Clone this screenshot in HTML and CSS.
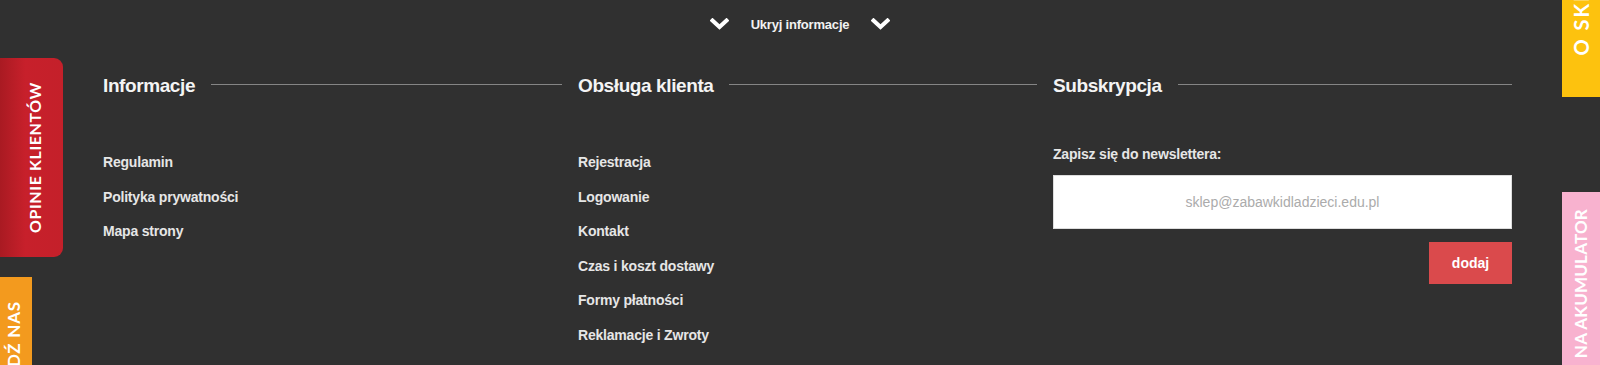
FILE: index.html
```html
<!DOCTYPE html>
<html lang="pl">
<head>
<meta charset="utf-8">
<title>Stopka</title>
<link rel="stylesheet" href="styles.css">
</head>
<body>
<footer class="footer">
  <div class="toggle">
    <svg class="chev" viewBox="0 0 19 12" width="19" height="12"><path d="M2.5 2.5 L9.5 9 L16.5 2.5" fill="none" stroke="#fff" stroke-width="4" stroke-linecap="square" stroke-linejoin="miter"/></svg>
    <span class="toggle-text">Ukryj informacje</span>
    <svg class="chev" viewBox="0 0 19 12" width="19" height="12"><path d="M2.5 2.5 L9.5 9 L16.5 2.5" fill="none" stroke="#fff" stroke-width="4" stroke-linecap="square" stroke-linejoin="miter"/></svg>
  </div>

  <div class="cols">
    <section class="col">
      <div class="col-head"><h3>Informacje</h3><span class="rule"></span></div>
      <ul class="links">
        <li><a href="#">Regulamin</a></li>
        <li><a href="#">Polityka prywatności</a></li>
        <li><a href="#">Mapa strony</a></li>
      </ul>
    </section>
    <section class="col">
      <div class="col-head"><h3>Obsługa klienta</h3><span class="rule"></span></div>
      <ul class="links">
        <li><a href="#">Rejestracja</a></li>
        <li><a href="#">Logowanie</a></li>
        <li><a href="#">Kontakt</a></li>
        <li><a href="#">Czas i koszt dostawy</a></li>
        <li><a href="#">Formy płatności</a></li>
        <li><a href="#">Reklamacje i Zwroty</a></li>
      </ul>
    </section>
    <section class="col">
      <div class="col-head"><h3>Subskrypcja</h3><span class="rule"></span></div>
      <form class="newsletter">
        <label class="nl-label" for="nl">Zapisz się do newslettera:</label>
        <input id="nl" class="nl-input" type="text" placeholder="sklep@zabawkidladzieci.edu.pl">
        <div class="nl-actions"><button type="button" class="nl-btn">dodaj</button></div>
      </form>
    </section>
  </div>
</footer>

<a href="#" class="tab tab-red"><span class="tab-text">OPINIE KLIENTÓW</span></a>
<a href="#" class="tab tab-orange"><span class="tab-text">ZNAJDŹ NAS</span></a>
<a href="#" class="tab tab-yellow"><span class="tab-text">O SKLEPIE</span></a>
<a href="#" class="tab tab-pink"><span class="tab-text">NA AKUMULATOR</span></a>
</body>
</html>
```

FILE: styles.css
```css
html, body {
  margin: 0;
  padding: 0;
  height: 100%;
  overflow: hidden;
}
body {
  background: #303030;
  font-family: "Liberation Sans", Arial, sans-serif;
  color: #ececec;
  position: relative;
}
.footer {
  padding: 0 0 0 103px;
}
.toggle {
  display: flex;
  justify-content: center;
  align-items: center;
  gap: 22px;
  height: 20px;
  padding-top: 14px;
  margin-left: -103px;
}
.chev { display: block; margin-top: -1px; }
.toggle-text {
  font-size: 13px;
  font-weight: bold;
  color: #f2f2f2;
  letter-spacing: -0.2px;
}
.cols {
  display: grid;
  grid-template-columns: repeat(3, 459px);
  column-gap: 16px;
  margin-top: 41px;
}
.col-head {
  display: flex;
  align-items: center;
  height: 22px;
}
.col-head h3 {
  margin: 0;
  font-size: 19px;
  line-height: 22px;
  font-weight: bold;
  color: #f4f4f4;
  letter-spacing: -0.4px;
}
.rule {
  flex: 1;
  height: 1px;
  background: #858585;
  margin-left: 16px;
  margin-top: -3px;
}
.links {
  list-style: none;
  margin: 48px 0 0;
  padding: 0;
}
.links li {
  line-height: 34.5px;
  height: 34.5px;
}
.links a {
  color: #e6e6e6;
  text-decoration: none;
  font-size: 14px;
  font-weight: bold;
  letter-spacing: -0.2px;
}
.newsletter {
  margin-top: 47px;
  display: flex;
  flex-direction: column;
}
.nl-label {
  font-size: 14px;
  line-height: 20px;
  font-weight: bold;
  color: #e6e6e6;
  letter-spacing: -0.2px;
}
.nl-input {
  margin-top: 11px;
  height: 54px;
  box-sizing: border-box;
  border: 1px solid #ddd;
  background: #fff;
  text-align: center;
  font-family: "Liberation Sans", Arial, sans-serif;
  font-size: 14px;
  color: #555;
  padding: 0 10px;
  outline: none;
}
.nl-input::placeholder { color: #ababab; }
.nl-actions {
  display: flex;
  justify-content: flex-end;
  margin-top: 13px;
}
.nl-btn {
  width: 83px;
  height: 42px;
  border: 0;
  background: #da4a4c;
  color: #fff;
  font-family: "Liberation Sans", Arial, sans-serif;
  font-size: 14px;
  font-weight: bold;
  cursor: pointer;
}

/* fixed side tabs (overlay) */
.tab {
  position: absolute;
  display: flex;
  justify-content: center;
  text-decoration: none;
  color: #fff;
  font-family: Lato, "Noto Sans", sans-serif;
  font-weight: bold;
  box-sizing: border-box;
}
.tab-text {
  writing-mode: vertical-rl;
  transform: rotate(180deg);
  white-space: nowrap;
}
.tab-red {
  left: 0;
  top: 58px;
  width: 63px;
  height: 199px;
  align-items: center;
  background: linear-gradient(to right, #a91a22, #c7202b 40%, #c4202a);
  border-radius: 0 9px 9px 0;
  font-size: 16px;
  letter-spacing: 0.6px;
}
.tab-red .tab-text { margin-left: 6px; }
.tab-orange {
  left: 0;
  top: 277px;
  width: 32px;
  height: 160px;
  align-items: flex-start;
  padding-top: 24px;
  background: #f39a1e;
  font-size: 17px;
  letter-spacing: 0.8px;
}
.tab-orange .tab-text { margin-left: -5px; }
.tab-yellow {
  right: 0;
  top: -100px;
  width: 38px;
  height: 197px;
  align-items: flex-end;
  padding-bottom: 42px;
  background: #fdc20e;
  font-size: 20px;
  letter-spacing: 2px;
}
.tab-pink {
  right: 0;
  top: 192px;
  width: 38px;
  height: 220px;
  align-items: flex-start;
  padding-top: 17px;
  background: #f8b2cf;
  font-size: 17px;
  letter-spacing: 0.2px;
  justify-content: center;
}
.tab-pink .tab-text { margin-left: -2px; }
```
